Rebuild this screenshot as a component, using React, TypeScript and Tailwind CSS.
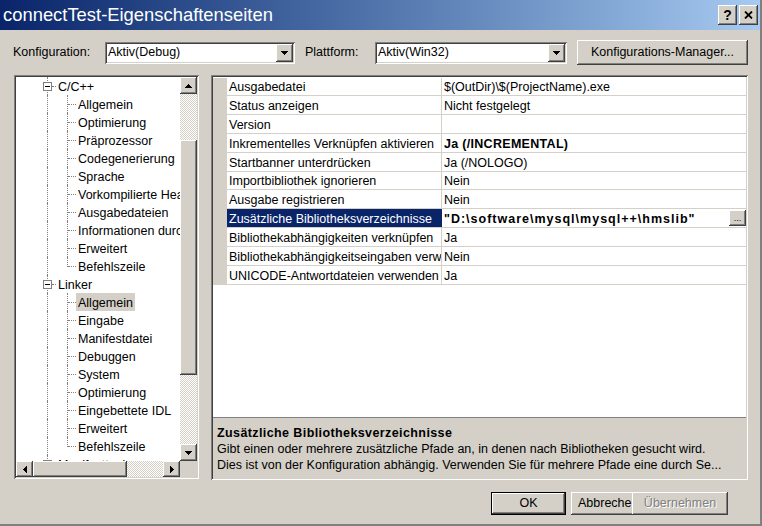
import React from 'react'

const raised =
  'bg-[#d4d0c8] shadow-[inset_-1px_-1px_0_#404040,inset_1px_1px_0_#ffffff,inset_-2px_-2px_0_#808080,inset_2px_2px_0_#d4d0c8]'
const sunken =
  'shadow-[inset_1px_1px_0_#808080,inset_-1px_-1px_0_#ffffff,inset_2px_2px_0_#404040,inset_-2px_-2px_0_#d4d0c8]'
const checker = 'bg-[repeating-conic-gradient(#ffffff_0%_25%,#d4d0c8_0%_50%)] bg-[length:2px_2px]'

const arrows = {
  up: { w: 7, h: 4, d: 'M3 0h1v1H3z M2 1h3v1H2z M1 2h5v1H1z M0 3h7v1H0z' },
  down: { w: 7, h: 4, d: 'M0 0h7v1H0z M1 1h5v1H1z M2 2h3v1H2z M3 3h1v1H3z' },
  left: { w: 4, h: 7, d: 'M0 3h1v1H0z M1 2h1v3H1z M2 1h1v5H2z M3 0h1v7H3z' },
  right: { w: 4, h: 7, d: 'M0 0h1v7H0z M1 1h1v5H1z M2 2h1v3H2z M3 3h1v1H3z' },
}

function Arrow({ dir }: { dir: keyof typeof arrows }) {
  const a = arrows[dir]
  return (
    <svg width={a.w} height={a.h} viewBox={`0 0 ${a.w} ${a.h}`} shapeRendering="crispEdges">
      <path d={a.d} fill="#000" />
    </svg>
  )
}

function Combo({ value, width }: { value: string; width: string }) {
  return (
    <div className={`flex h-[22px] items-center bg-white p-[2px] ${sunken} ${width}`}>
      <span className="flex-1 pl-[1px]">{value}</span>
      <div className={`flex h-[18px] w-[17px] items-center justify-center ${raised}`}>
        <Arrow dir="down" />
      </div>
    </div>
  )
}

type TreeRow = { label: string; kind: 'top' | 'collapsed' | 'child' | 'last'; selected?: boolean }

const tree: TreeRow[] = [
  { label: 'C/C++', kind: 'top' },
  { label: 'Allgemein', kind: 'child' },
  { label: 'Optimierung', kind: 'child' },
  { label: 'Präprozessor', kind: 'child' },
  { label: 'Codegenerierung', kind: 'child' },
  { label: 'Sprache', kind: 'child' },
  { label: 'Vorkompilierte Header', kind: 'child' },
  { label: 'Ausgabedateien', kind: 'child' },
  { label: 'Informationen durchsuchen', kind: 'child' },
  { label: 'Erweitert', kind: 'child' },
  { label: 'Befehlszeile', kind: 'last' },
  { label: 'Linker', kind: 'top' },
  { label: 'Allgemein', kind: 'child', selected: true },
  { label: 'Eingabe', kind: 'child' },
  { label: 'Manifestdatei', kind: 'child' },
  { label: 'Debuggen', kind: 'child' },
  { label: 'System', kind: 'child' },
  { label: 'Optimierung', kind: 'child' },
  { label: 'Eingebettete IDL', kind: 'child' },
  { label: 'Erweitert', kind: 'child' },
  { label: 'Befehlszeile', kind: 'last' },
  { label: 'Manifesttool', kind: 'collapsed' },
]

function TreeLine({ row }: { row: TreeRow }) {
  const isTop = row.kind === 'top' || row.kind === 'collapsed'
  return (
    <div className="flex h-[18px] shrink-0 pl-[22px]">
      <div className="relative w-[18px] shrink-0">
        <div className="absolute top-0 bottom-0 left-[9px] border-l border-dotted border-[#808080]" />
        {isTop && (
          <>
            <div className="absolute top-[9px] right-0 left-[14px] border-t border-dotted border-[#808080]" />
            <div className="absolute top-[5px] left-[5px] h-[9px] w-[9px] border border-[#808080] bg-white">
              <div className="absolute top-[3px] left-[1px] h-px w-[5px] bg-black" />
              {row.kind === 'collapsed' && <div className="absolute top-[1px] left-[3px] h-[5px] w-px bg-black" />}
            </div>
          </>
        )}
      </div>
      {!isTop && (
        <div className="relative w-[20px] shrink-0">
          <div
            className={`absolute top-0 left-[11px] border-l border-dotted border-[#808080] ${
              row.kind === 'last' ? 'h-[10px]' : 'bottom-0'
            }`}
          />
          <div className="absolute top-[9px] right-0 left-[12px] border-t border-dotted border-[#808080]" />
        </div>
      )}
      <div
        className={`h-[18px] px-[2px] pt-[1px] leading-[18px] whitespace-nowrap ${row.selected ? 'bg-[#d4d0c8]' : ''}`}
      >
        {row.label}
      </div>
    </div>
  )
}

type Prop = { name: string; value: string; h: string; bold?: boolean; selected?: boolean }

const props: Prop[] = [
  { name: 'Ausgabedatei', value: '$(OutDir)\\$(ProjectName).exe', h: 'h-[18px]' },
  { name: 'Status anzeigen', value: 'Nicht festgelegt', h: 'h-[19px]' },
  { name: 'Version', value: '', h: 'h-[19px]' },
  { name: 'Inkrementelles Verknüpfen aktivieren', value: 'Ja (/INCREMENTAL)', h: 'h-[19px]', bold: true },
  { name: 'Startbanner unterdrücken', value: 'Ja (/NOLOGO)', h: 'h-[19px]' },
  { name: 'Importbibliothek ignorieren', value: 'Nein', h: 'h-[18px]' },
  { name: 'Ausgabe registrieren', value: 'Nein', h: 'h-[19px]' },
  {
    name: 'Zusätzliche Bibliotheksverzeichnisse',
    value: '"D:\\software\\mysql\\mysql++\\hmslib"',
    h: 'h-[19px]',
    selected: true,
  },
  { name: 'Bibliothekabhängigkeiten verknüpfen', value: 'Ja', h: 'h-[19px]' },
  { name: 'Bibliothekabhängigkeitseingaben verwenden', value: 'Nein', h: 'h-[19px]' },
  { name: 'UNICODE-Antwortdateien verwenden', value: 'Ja', h: 'h-[19px]' },
]

export default function App() {
  return (
    <div className="flex h-[526px] w-[762px] flex-col overflow-hidden border-r-2 border-b-2 border-[#808080] bg-[#d4d0c8] font-['Liberation_Sans',Arial,sans-serif] text-[12.5px] text-black">
      {/* title bar */}
      <div className="flex h-[30px] shrink-0 items-center bg-linear-to-r from-[#0a246a] to-[#a6caf0] pr-[2px] pl-[3px]">
        <span className="flex-1 pt-[1px] text-[18.4px] leading-none text-white">connectTest-Eigenschaftenseiten</span>
        <div className="flex gap-[2px]">
          <div className={`flex h-[20px] w-[19px] items-center justify-center text-[14px] font-bold ${raised}`}>?</div>
          <div className={`flex h-[20px] w-[19px] items-center justify-center ${raised}`}>
            <svg width="9" height="8" viewBox="0 0 9 8">
              <path d="M1 0.5 L8 7.5 M8 0.5 L1 7.5" stroke="#000" strokeWidth="1.8" />
            </svg>
          </div>
        </div>
      </div>

      {/* configuration row */}
      <div className="mt-[10px] flex h-[25px] shrink-0 items-center">
        <span className="ml-[13px] w-[92px]">Konfiguration:</span>
        <Combo value="Aktiv(Debug)" width="w-[190px]" />
        <span className="ml-[10px] w-[70px]">Plattform:</span>
        <Combo value="Aktiv(Win32)" width="w-[192px]" />
        <div className={`ml-[10px] flex h-[25px] w-[171px] items-center justify-center ${raised}`}>
          Konfigurations-Manager...
        </div>
      </div>

      {/* panels */}
      <div className="mt-[10px] flex h-[405px] shrink-0 items-start">
        {/* tree */}
        <div className={`ml-[14px] flex h-[404px] w-[185px] flex-col p-[2px] ${sunken}`}>
          <div className="flex h-[384px]">
            <div className="flex w-[164px] flex-col overflow-hidden bg-white">
              {tree.map((r, i) => (
                <TreeLine key={i} row={r} />
              ))}
            </div>
            <div className="flex w-[17px] flex-col">
              <div className={`flex h-[17px] items-center justify-center ${raised}`}>
                <Arrow dir="up" />
              </div>
              <div className={`h-[46px] ${checker}`} />
              <div className={`h-[235px] ${raised}`} />
              <div className={`flex-1 ${checker}`} />
              <div className={`flex h-[17px] items-center justify-center ${raised}`}>
                <Arrow dir="down" />
              </div>
            </div>
          </div>
          <div className="flex h-[16px]">
            <div className="flex w-[164px]">
              <div className={`flex w-[17px] items-center justify-center ${raised}`}>
                <Arrow dir="left" />
              </div>
              <div className={`w-[94px] ${raised}`} />
              <div className={`flex-1 ${checker}`} />
              <div className={`flex w-[17px] items-center justify-center ${raised}`}>
                <Arrow dir="right" />
              </div>
            </div>
            <div className="w-[17px] bg-[#d4d0c8]" />
          </div>
        </div>

        {/* property grid + description */}
        <div className={`ml-[12px] flex h-[405px] w-[537px] flex-col p-[2px] ${sunken}`}>
          <div className="flex h-[340px] flex-col bg-white pt-[1px]">
            {props.map((p, i) => (
              <div key={i} className={`flex shrink-0 border-b border-[#d4d0c8] ${p.h}`}>
                <div className="w-[14px] shrink-0 bg-[#d4d0c8]" />
                <div
                  className={`flex w-[215px] shrink-0 items-center overflow-hidden border-r pt-[2px] pl-[2px] whitespace-nowrap ${
                    p.selected ? 'border-[#0a246a] bg-[#0a246a] text-white' : 'border-[#d4d0c8]'
                  }`}
                >
                  {p.name}
                </div>
                <div className="flex flex-1 items-center justify-between overflow-hidden pl-[2px] whitespace-nowrap">
                  <span
                    className={`pt-[2px] ${
                      p.selected ? 'font-bold tracking-[1px]' : p.bold ? 'font-bold tracking-[0.3px]' : ''
                    }`}
                  >
                    {p.value}
                  </span>
                  {p.selected && (
                    <div
                      className={`flex h-[16px] w-[17px] items-end justify-center pb-[3px] text-[9px] leading-none ${raised}`}
                    >
                      ...
                    </div>
                  )}
                </div>
              </div>
            ))}
          </div>
          <div className="h-[3px] shrink-0 border-t border-[#808080]" />
          <div className="flex-1 pt-[5px] pl-[4px] leading-[16px] whitespace-nowrap">
            <div className="font-bold tracking-[0.4px]">Zusätzliche Bibliotheksverzeichnisse</div>
            <div>Gibt einen oder mehrere zusätzliche Pfade an, in denen nach Bibliotheken gesucht wird.</div>
            <div>Dies ist von der Konfiguration abhängig. Verwenden Sie für mehrere Pfade eine durch Se...</div>
          </div>
        </div>
      </div>

      {/* buttons */}
      <div className="mt-[12px] flex h-[23px] shrink-0 justify-end pr-[32px]">
        <div className={`flex w-[75px] items-center justify-center border border-black ${raised}`}>OK</div>
        <div className="ml-[5px] flex w-[61px] items-center overflow-hidden bg-[#d4d0c8] pl-[7px] whitespace-nowrap shadow-[inset_0_-1px_0_#404040,inset_1px_1px_0_#ffffff,inset_0_-2px_0_#808080]">
          Abbreche
        </div>
        <div
          className={`flex w-[96px] items-center justify-center text-[#808080] [text-shadow:1px_1px_0_#ffffff] ${raised}`}
        >
          Übernehmen
        </div>
      </div>
    </div>
  )
}
